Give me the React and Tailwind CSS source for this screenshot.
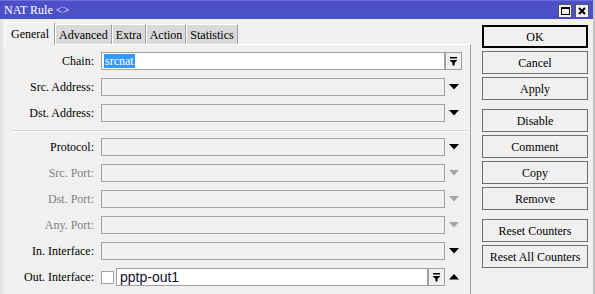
const SERIF = { fontFamily: '"Liberation Serif", "Times New Roman", serif' };

const TABS = ['General', 'Advanced', 'Extra', 'Action', 'Statistics'];

const ROWS_TOP = [
  { label: 'Chain:', kind: 'chain' },
  { label: 'Src. Address:', kind: 'plain' },
  { label: 'Dst. Address:', kind: 'plain' },
];

const ROWS_BOTTOM = [
  { label: 'Protocol:', kind: 'plain' },
  { label: 'Src. Port:', kind: 'plain', disabled: true },
  { label: 'Dst. Port:', kind: 'plain', disabled: true },
  { label: 'Any. Port:', kind: 'plain', disabled: true },
  { label: 'In. Interface:', kind: 'plain' },
  { label: 'Out. Interface:', kind: 'out' },
];

const BUTTON_GROUPS = [
  ['OK', 'Cancel', 'Apply'],
  ['Disable', 'Comment', 'Copy', 'Remove'],
  ['Reset Counters', 'Reset All Counters'],
];

function DownArrow({ gray }) {
  return (
    <svg width="10" height="6" viewBox="0 0 10 6" className="block">
      <polygon points="0,0 10,0 5,5.5" fill={gray ? '#a6a6a6' : '#000'} />
    </svg>
  );
}

function UpArrow() {
  return (
    <svg width="10" height="6" viewBox="0 0 10 6" className="block">
      <polygon points="0,5.5 10,5.5 5,0" fill="#000" />
    </svg>
  );
}

function DropButton() {
  return (
    <div className="w-[17px] h-[18px] border border-[#a0a0a0] bg-[#f0f0f0] flex items-center justify-center">
      <svg width="9" height="9" viewBox="0 0 9 9" className="block">
        <rect x="1" y="0" width="7" height="1.5" fill="#000" />
        <polygon points="0.5,3 8.5,3 4.5,7" fill="#000" />
        <rect x="3.5" y="6" width="2" height="2.5" fill="#000" />
      </svg>
    </div>
  );
}

function FieldRow({ row }) {
  const labelColor = row.disabled ? 'text-[#808080]' : 'text-black';
  return (
    <div className="flex items-center h-[18px] mb-[8px]">
      <div className={`w-[90px] text-right text-[12px] leading-none pr-px ${labelColor}`} style={SERIF}>
        {row.label}
      </div>
      <div className="w-[6px]" />
      {row.kind === 'chain' && (
        <>
          <div className="w-[344px] h-[18px] border border-[#a0a0a0] bg-white flex items-center pl-[2px]">
            <span className="bg-[#3399ff] text-white text-[12px] leading-[14px] px-px" style={SERIF}>
              srcnat
            </span>
          </div>
          <DropButton />
        </>
      )}
      {row.kind === 'plain' && (
        <>
          <div className="w-[344px] h-[18px] border border-[#a0a0a0] bg-[#f0f0f0]" />
          <div className="w-[17px] flex justify-center pl-[1px]">
            <DownArrow gray={row.disabled} />
          </div>
        </>
      )}
      {row.kind === 'out' && (
        <>
          <div className="w-[13px] h-[13px] border border-[#a0a0a0] bg-white" />
          <div className="w-[2px]" />
          <div
            className="w-[312px] h-[18px] border border-[#a0a0a0] bg-white flex items-center pl-[3px] text-[14px] text-[#101030]"
            style={{ fontFamily: '"Liberation Sans", Arial, sans-serif' }}
          >
            pptp-out1
          </div>
          <DropButton />
          <div className="w-[17px] flex justify-center pl-[1px]">
            <UpArrow />
          </div>
        </>
      )}
    </div>
  );
}

export default function App() {
  return (
    <div className="w-[595px] h-[294px] bg-[#f0f0f0] flex flex-col overflow-hidden border-r-[2px] border-[#c4c4c4]" style={SERIF}>
      <div className="h-[20px] bg-[#4b4fc8] border-t border-[#6a6ed6] flex items-center justify-between pl-[4px] pr-[4px]">
        <span className="text-white text-[12px] leading-none">NAT Rule &lt;&gt;</span>
        <div className="flex gap-[3px] mt-[2px]">
          <div className="w-[14px] h-[14px] bg-[#f0f0f0] border border-[#555] flex items-center justify-center">
            <div className="w-[9px] h-[8px] border border-black border-t-2" />
          </div>
          <div className="w-[14px] h-[14px] bg-[#f0f0f0] border border-[#555] flex items-center justify-center">
            <svg width="8" height="8" viewBox="0 0 8 8" className="block">
              <path d="M1 1 L7 7 M7 1 L1 7" stroke="#000" strokeWidth="2" />
            </svg>
          </div>
        </div>
      </div>

      <div className="flex flex-1 border-l-[3px] border-[#e4e4e4]">
        <div className="w-[468px] flex flex-col pt-[2px]">
          <div className="flex items-end h-[23px] pl-[2px]">
            {TABS.map((t, i) =>
              i === 0 ? (
                <div
                  key={t}
                  className="h-[23px] px-[5px] bg-[#f0f0f0] border-t border-l border-white border-r border-r-[#a0a0a0] flex items-center text-[12px] relative z-10 -mb-px"
                >
                  {t}
                </div>
              ) : (
                <div
                  key={t}
                  className="h-[20px] px-[3px] bg-[#d9d9d9] border-t border-l border-white border-r border-r-[#a0a0a0] flex items-center text-[12px]"
                >
                  {t}
                </div>
              )
            )}
          </div>
          <div className="flex-1 border-t border-white border-r border-r-[#a0a0a0] pt-[7px] pl-[2px]">
            {ROWS_TOP.map((r) => (
              <FieldRow key={r.label} row={r} />
            ))}
            <div className="ml-[7px] w-[455px] h-[2px] border-t border-[#d6d6d6] border-b border-b-white mb-[6px]" />
            {ROWS_BOTTOM.map((r) => (
              <FieldRow key={r.label} row={r} />
            ))}
          </div>
        </div>

        <div className="flex flex-col pl-[11px] pt-[6px]">
          {BUTTON_GROUPS.map((g, gi) => (
            <div key={gi} className={`flex flex-col gap-[3px] ${gi > 0 ? 'mt-[9px]' : ''}`}>
              {g.map((b) => (
                <div
                  key={b}
                  className={`w-[106px] h-[23px] flex items-center justify-center text-[12px] bg-[#f0f0f0] ${
                    b === 'OK' ? 'border-2 border-black' : 'border border-[#6e6e6e]'
                  }`}
                >
                  {b}
                </div>
              ))}
            </div>
          ))}
        </div>
      </div>
    </div>
  );
}
